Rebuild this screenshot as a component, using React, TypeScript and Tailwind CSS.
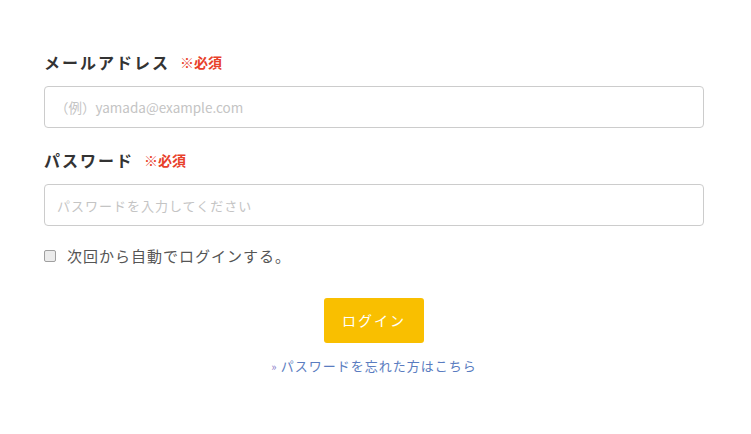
import { useState } from 'react'

const font = { fontFamily: '"Noto Sans CJK JP", "Noto Sans", sans-serif' }

export default function App() {
  const [remember, setRemember] = useState(false)

  return (
    <div className="min-h-[434px] w-[751px] bg-white" style={font}>
      <form className="ml-[44px] w-[660px] pt-[50px] flex flex-col" onSubmit={(e) => e.preventDefault()}>
        <label className="flex items-center h-[24px] mb-[12px]">
          <span className="text-[16px] font-bold text-[#333] tracking-[2px]">メールアドレス</span>
          <span className="ml-[10px] text-[14px] font-bold text-[#e8402a]">※必須</span>
        </label>
        <input
          type="email"
          placeholder="（例）yamada@example.com"
          className="h-[42px] w-full rounded-[4px] border border-[#cccccc] px-[10px] text-[13.5px] text-[#333] placeholder:text-[#c4c4c4] outline-none"
        />

        <label className="flex items-center h-[24px] mt-[20px] mb-[12px]">
          <span className="text-[16px] font-bold text-[#333] tracking-[2px]">パスワード</span>
          <span className="ml-[10px] text-[14px] font-bold text-[#e8402a]">※必須</span>
        </label>
        <input
          type="password"
          placeholder="パスワードを入力してください"
          className="h-[42px] w-full rounded-[4px] border border-[#cccccc] px-[12px] text-[13px] tracking-[1px] text-[#333] placeholder:text-[#c4c4c4] outline-none"
        />

        <label
          className="flex items-center h-[24px] mt-[18px] cursor-pointer"
          onClick={() => setRemember(!remember)}
        >
          <span className="w-[12px] h-[12px] rounded-[2px] border border-[#a0a0a0] bg-[#ececec]" />
          <span className="ml-[11px] text-[15px] text-[#555] tracking-[1px]">次回から自動でログインする。</span>
        </label>

        <div className="flex justify-center mt-[30px]">
          <button
            type="submit"
            className="w-[100px] h-[45px] rounded-[3px] bg-[#f9bf00] text-white text-[14px] tracking-[2px]"
          >
            ログイン
          </button>
        </div>

        <div className="flex justify-center items-center h-[20px] mt-[13px] text-[13px] tracking-[1px]">
          <a href="#" className="text-[#5a7cc0]">
            <span className="text-[#8a7cc8] text-[11px] mr-[3px]">»</span>パスワードを忘れた方はこちら
          </a>
        </div>
      </form>
    </div>
  )
}
